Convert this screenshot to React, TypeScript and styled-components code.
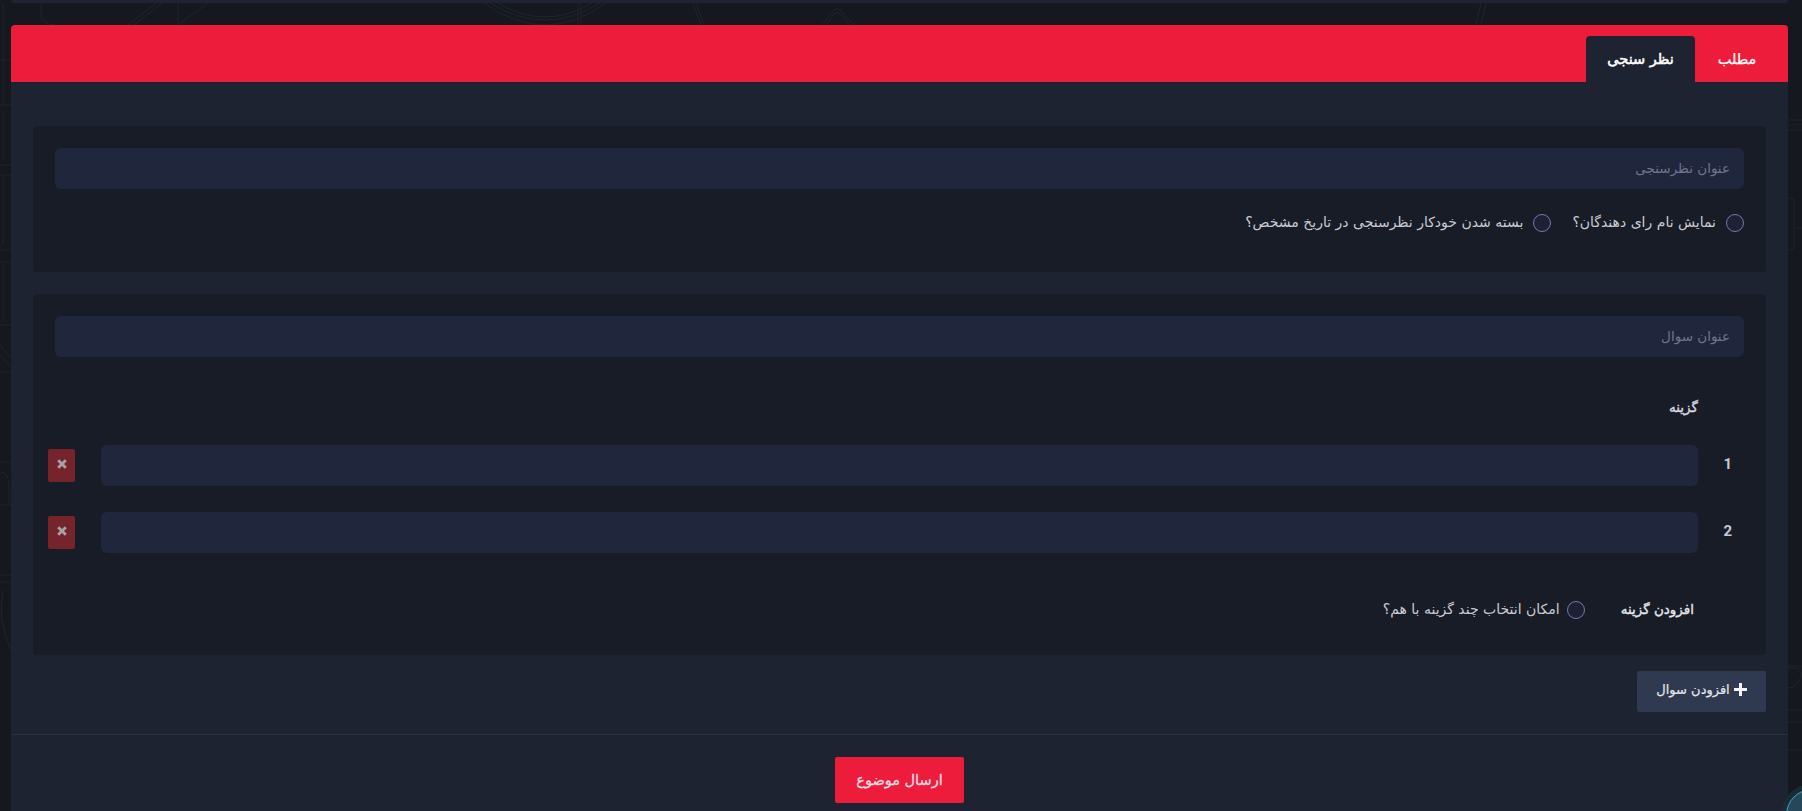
import React from "react";
import styled, { createGlobalStyle } from "styled-components";

const Global = createGlobalStyle`
  html, body { margin: 0; padding: 0; height: 811px; overflow: hidden; background: #15191f; }
  * { box-sizing: border-box; }
`;

const font = `"DejaVu Sans", "Noto Sans", sans-serif`;

const Page = styled.div`
  position: relative;
  direction: rtl;
  height: 811px;
  overflow: hidden;
  padding: 0 14px 0 11px;
  font-family: ${font};
  background: #15191f;
`;
const TopStrip = styled.div`
  position: relative;
  height: 3px;
  margin-bottom: 22px;
  background: #1e2435;
  border-radius: 0 0 4px 4px;
`;
const Card = styled.div`
  position: relative;
  height: 786px;
  background: #1d2330;
  border-radius: 4px 4px 0 0;
`;
const TabBar = styled.div`
  display: flex;
  align-items: flex-end;
  height: 57px;
  padding: 0 9px;
  background: #ec1c3a;
  border-radius: 4px 4px 0 0;
`;
const Tab = styled.div<{ $active?: boolean }>`
  display: flex;
  align-items: center;
  justify-content: center;
  width: ${(p) => (p.$active ? "109px" : "84px")};
  height: 46px;
  font-size: 14.5px;
  color: #fff;
  -webkit-text-stroke: ${(p) => (p.$active ? "0.55px" : "0.25px")} #fff;
  background: ${(p) => (p.$active ? "#1d2330" : "transparent")};
  border-radius: 4px 4px 0 0;
`;
const Body = styled.div`
  display: flex;
  flex-direction: column;
  gap: 22px;
  padding: 44px 22px 0;
`;
const Section = styled.section`
  display: flex;
  flex-direction: column;
  padding: 22px;
  background: #181c26;
  border-radius: 4px;
`;
const TextInput = styled.div<{ $flex?: boolean }>`
  display: flex;
  align-items: center;
  height: 41px;
  padding: 0 14px 2px;
  flex: ${(p) => (p.$flex ? 1 : "none")};
  font-size: 13.5px;
  color: #70748f;
  background: #20273c;
  border-radius: 6px;
`;
const RadioRow = styled.div`
  display: flex;
  align-items: center;
  gap: 21px;
  height: 20px;
  margin: 24px 0 17px;
`;
const RadioItem = styled.label<{ $tight?: boolean }>`
  display: flex;
  align-items: center;
  gap: ${(p) => (p.$tight ? "7px" : "10px")};
  font-size: 14px;
  color: #c8cbd3;
`;
const RadioText = styled.span`
  margin-bottom: 3px;
`;
const RadioDot = styled.span`
  width: 18px;
  height: 18px;
  border: 1px solid #7379ad;
  border-radius: 50%;
  background: #1d2133;
`;
const OptionHead = styled.div`
  display: flex;
  height: 20px;
  align-items: center;
  margin: 40px 0 28px;
  padding-right: 46px;
  font-size: 13.5px;
  color: #d5d8e0;
  -webkit-text-stroke: 0.4px #d5d8e0;
`;
const OptionRow = styled.div`
  display: flex;
  align-items: center;
  margin-bottom: 26px;
`;
const OptionNumber = styled.div`
  width: 46px;
  padding: 0 12px 4px 0;
  font-family: Roboto, sans-serif;
  font-size: 15px;
  font-weight: 700;
  color: #c5c9d6;
`;
const DeleteCell = styled.div`
  display: flex;
  justify-content: flex-end;
  width: 53px;
  margin-left: -7px;
`;
const DeleteButton = styled.button`
  display: flex;
  align-items: center;
  justify-content: center;
  width: 27px;
  height: 33px;
  padding: 0 0 4px;
  border: 0;
  border-radius: 2px;
  background: #75242b;
`;
const OptionFooter = styled.div`
  display: flex;
  align-items: center;
  height: 20px;
  margin-top: 21px;
  margin-bottom: 13px;
  padding-right: 50px;
  gap: 36px;
`;
const AddOption = styled.span`
  margin-bottom: 2px;
  font-size: 13.5px;
  color: #e4e6eb;
  -webkit-text-stroke: 0.35px #e4e6eb;
`;
const ActionRow = styled.div`
  display: flex;
  margin-top: -6px;
`;
const AddQuestion = styled.button`
  display: flex;
  align-items: center;
  justify-content: center;
  gap: 4px;
  width: 129px;
  height: 41px;
  padding: 0 0 4px;
  border: 0;
  border-radius: 2px;
  font-family: ${font};
  font-size: 13px;
  color: #e4e6eb;
  -webkit-text-stroke: 0.2px #e4e6eb;
  background: #2f394f;
`;
const Divider = styled.hr`
  height: 1px;
  margin: 22px 0 0;
  border: 0;
  background: #2a3047;
`;
const Footer = styled.div`
  display: flex;
  justify-content: center;
  padding-top: 22px;
`;
const Submit = styled.button`
  width: 129px;
  height: 46px;
  border: 0;
  border-radius: 2px;
  font-family: ${font};
  font-size: 14.5px;
  color: #f6dfe3;
  -webkit-text-stroke: 0.3px #f6dfe3;
  background: #ec1c3a;
`;
const FloatingBadge = styled.div`
  position: absolute;
  left: 1786px;
  top: 789px;
  width: 52px;
  height: 52px;
  border-radius: 50%;
  border: 1px solid #39a7c9;
  background: #26475a;
  box-shadow: 0 0 0 5px #1b2b36;
`;
const Backdrop = styled.svg`
  position: absolute;
  left: 0;
  top: 0;
  pointer-events: none;
`;

const Cross = () => (
  <svg width="12" height="12" viewBox="0 0 12 12" aria-hidden="true">
    <path d="M2.2 2.2 9.8 9.8M9.8 2.2 2.2 9.8" stroke="#a4a4a8" strokeWidth="2.8" />
  </svg>
);
const Plus = () => (
  <svg width="13" height="13" viewBox="0 0 13 13" aria-hidden="true">
    <path d="M6.5 0v13M0 6.5h13" stroke="#f2f4f8" strokeWidth="3" />
  </svg>
);

const options = [1, 2];

export default function App() {
  return (
    <Page>
      <Global />
      <Backdrop width="1802" height="811" fill="none" stroke="#20252b" strokeWidth="1" aria-hidden="true">
        <path d="M41 3v10q0 12 14 12M128 25l28-22M134 25l28-22M178 25V3M178 25l30-22" />
        <path d="M490 3q55 34 110 0M498 3q47 28 94 0M484 3q61 44 122 0M578 3v22M581 3v22" />
        <path d="M693 3l8 22M696 3l8 22M822 25l12-15q3-3 6 0l14 15M826 25l8-11q3-3 6 0l10 11" />
        <path d="M1476 25l5-22M1481 25l5-22" />
        <path d="M3 3v100M0 60h11M0 105h11M3 110v50M0 165h11M0 175h11M3 175v70M0 250h11M0 262h11M3 262v60M0 325h11M0 345l11 12M0 355l11 12M0 372h11M0 462h11M0 472q9 0 9 14v18M0 505h11M0 575h11M0 582h11M3 590q-6 30 8 60" />
        <path d="M1788 120h14M1788 125h14M1788 130h14" />
        <path d="M1788 198h2q4 0 4 4v44q0 4-4 4h-2M1794 228h8" />
        <path d="M1788 666h14M1788 668h8q5 0 5 8-3 12-13 12M1788 710h14M1788 722h14M1788 750h14" />
      </Backdrop>
      <TopStrip />
      <Card>
        <TabBar>
          <Tab>مطلب</Tab>
          <Tab $active>نظر سنجی</Tab>
        </TabBar>
        <Body>
          <Section>
            <TextInput>عنوان نظرسنجی</TextInput>
            <RadioRow>
              <RadioItem><RadioDot /><RadioText>نمایش نام رای دهندگان؟</RadioText></RadioItem>
              <RadioItem><RadioDot /><RadioText>بسته شدن خودکار نظرسنجی در تاریخ مشخص؟</RadioText></RadioItem>
            </RadioRow>
          </Section>
          <Section>
            <TextInput>عنوان سوال</TextInput>
            <OptionHead>گزینه</OptionHead>
            {options.map((n) => (
              <OptionRow key={n}>
                <OptionNumber>{n}</OptionNumber>
                <TextInput $flex />
                <DeleteCell>
                  <DeleteButton aria-label="حذف"><Cross /></DeleteButton>
                </DeleteCell>
              </OptionRow>
            ))}
            <OptionFooter>
              <AddOption>افزودن گزینه</AddOption>
              <RadioItem $tight><RadioDot /><RadioText>امکان انتخاب چند گزینه با هم؟</RadioText></RadioItem>
            </OptionFooter>
          </Section>
          <ActionRow>
            <AddQuestion><Plus />افزودن سوال</AddQuestion>
          </ActionRow>
        </Body>
        <Divider />
        <Footer>
          <Submit>ارسال موضوع</Submit>
        </Footer>
      </Card>
      <FloatingBadge />
    </Page>
  );
}
